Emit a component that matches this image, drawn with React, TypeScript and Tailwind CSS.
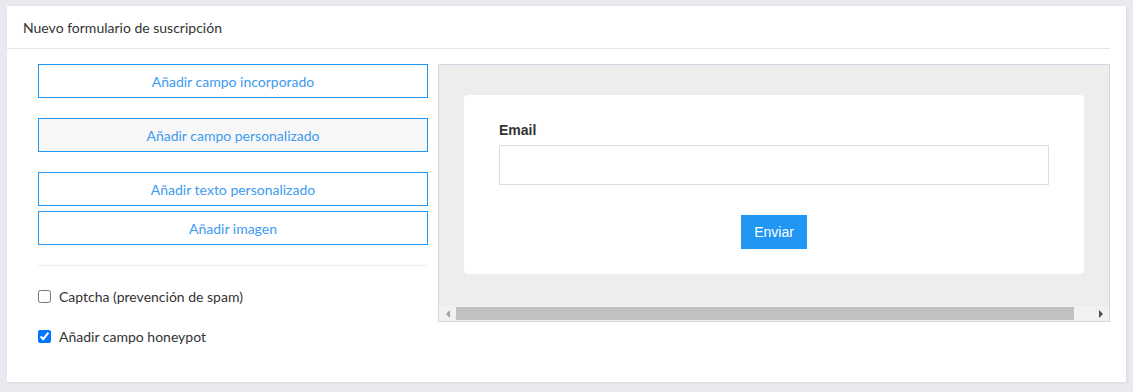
export default function App() {
  const actions = [
    { label: "Añadir campo incorporado", cls: "mb-5" },
    { label: "Añadir campo personalizado", cls: "mb-5 bg-[#f7f7f7]" },
    { label: "Añadir texto personalizado", cls: "mb-[5px]" },
    { label: "Añadir imagen", cls: "" },
  ]

  return (
    <div className="min-h-screen bg-[#e8eaf0] pt-[6px] pl-[7px] font-['Lato',sans-serif]">
      {/* Card */}
      <div className="w-[1119px] h-[376px] bg-white shadow-[1px_1px_3px_rgba(0,0,0,0.08)]">
        <div className="h-[43px] mr-4 pl-4 flex items-center border-b border-[#e6e6e6] text-[14px] text-[#333]">
          Nuevo formulario de suscripción
        </div>

        <div className="flex gap-[10px] pl-[31px] pr-4 pt-[15px]">
          {/* Left column */}
          <div className="w-[390px] shrink-0 flex flex-col">
            {actions.map((a) => (
              <button
                key={a.label}
                className={`h-[34px] w-full border border-[#2196f3] text-[14px] text-[#3d9bf0] ${a.cls}`}
              >
                {a.label}
              </button>
            ))}
            <div className="mt-5 border-t border-[#eeeeee]" />
            <label className="mt-5 flex items-center gap-2 text-[14px] text-[#333]">
              <input type="checkbox" className="w-[13px] h-[13px] m-0" />
              Captcha (prevención de spam)
            </label>
            <label className="mt-[19px] flex items-center gap-2 text-[14px] text-[#333]">
              <input type="checkbox" defaultChecked className="w-[13px] h-[13px] m-0" />
              Añadir campo honeypot
            </label>
          </div>

          {/* Preview */}
          <div className="flex-1 h-[258px] border border-[#cfd8e3] bg-[#ededeb] flex flex-col">
            <div className="flex-1 pt-[30px] px-[25px]">
              <div className="h-[179px] bg-white rounded-[4px] pt-[27px] px-[35px] font-['Liberation_Sans',sans-serif]">
                <div className="text-[14px] font-bold text-[#333] leading-4">Email</div>
                <div className="mt-[7px] h-[40px] border border-[#dcdce6]" />
                <div className="flex justify-center mt-[30px]">
                  <button className="h-[34px] px-[13px] bg-[#2196f3] text-white text-[14px]">Enviar</button>
                </div>
              </div>
            </div>
            {/* Horizontal scrollbar */}
            <div className="h-[15px] bg-[#f1f1f1] flex items-center">
              <div className="w-[17px] flex justify-center">
                <div className="w-0 h-0 border-y-[4px] border-y-transparent border-r-[4px] border-r-[#a3a3a3]" />
              </div>
              <div className="flex-1 h-[13px] bg-[#c1c1c1]" />
              <div className="w-[35px] flex justify-end pr-[6px]">
                <div className="w-0 h-0 border-y-[4px] border-y-transparent border-l-[4px] border-l-[#505050]" />
              </div>
            </div>
          </div>
        </div>
      </div>
    </div>
  )
}
